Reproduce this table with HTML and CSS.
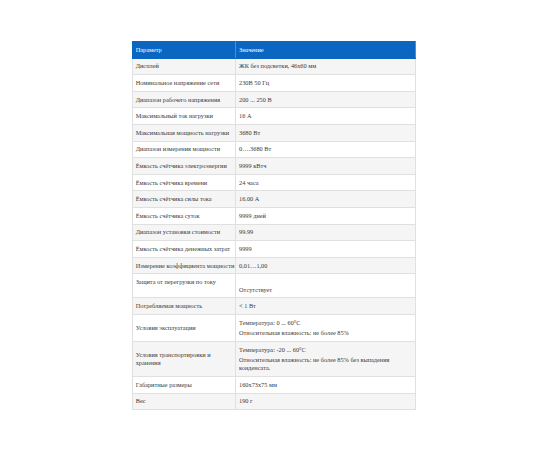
FILE: index.html
```html
<!DOCTYPE html>
<html lang="ru">
<head>
<meta charset="utf-8">
<title>Характеристики</title>
<link rel="stylesheet" href="styles.css">
</head>
<body>
<div class="page">
  <table class="specs">
    <thead>
      <tr><th class="c1">Параметр</th><th class="c2">Значение</th></tr>
    </thead>
    <tbody>
      <tr><td>Дисплей</td><td>ЖК без подсветки, 46x60 мм</td></tr>
      <tr><td>Номинальное напряжение сети</td><td>230В 50 Гц</td></tr>
      <tr><td>Диапазон рабочего напряжения</td><td>200 ... 250 В</td></tr>
      <tr><td>Максимальный ток нагрузки</td><td>16 А</td></tr>
      <tr><td>Максимальная мощность нагрузки</td><td>3680 Вт</td></tr>
      <tr><td>Диапазон измерения мощности</td><td>0….3680 Вт</td></tr>
      <tr><td>Ёмкость счётчика электроэнергии</td><td>9999 кВтч</td></tr>
      <tr><td>Ёмкость счётчика времени</td><td>24 часа</td></tr>
      <tr><td>Ёмкость счётчика силы тока</td><td>16.00 А</td></tr>
      <tr><td>Ёмкость счётчика суток</td><td>9999 дней</td></tr>
      <tr><td>Диапазон установки стоимости</td><td>99.99</td></tr>
      <tr><td>Ёмкость счётчика денежных затрат</td><td>9999</td></tr>
      <tr><td class="nowrap">Измерение коэффициента мощности</td><td>0,01…1,00</td></tr>
      <tr class="protect"><td class="top">Защита от перегрузки по току</td><td class="low">Отсутствует</td></tr>
      <tr><td>Потребляемая мощность</td><td>&lt; 1 Вт</td></tr>
      <tr><td>Условия эксплуатации</td><td><p class="para">Температура: 0 ... 60°C</p><p class="para">Относительная влажность: не более 85%</p></td></tr>
      <tr><td>Условия транспортировки и хранения</td><td><p class="para">Температура: -20 ... 60°C</p><p class="para">Относительная влажность: не более 85% без выпадения конденсата.</p></td></tr>
      <tr><td>Габаритные размеры</td><td>160x73x75 мм</td></tr>
      <tr><td>Вес</td><td>190 г</td></tr>
    </tbody>
  </table>
</div>
</body>
</html>
```
FILE: styles.css
```css
html, body {
  margin: 0;
  padding: 0;
  background: #ffffff;
}
.page {
  padding: 41px 0 0 132px;
}
.specs {
  border-collapse: collapse;
  width: 284px;
  table-layout: fixed;
  font-family: "Liberation Serif", "Times New Roman", serif;
  font-size: 6.3px;
  line-height: 8px;
  color: #3a3a3a;
}
.specs th {
  background: #0b66c2;
  color: #ffffff;
  font-weight: normal;
  text-align: left;
  padding: 3.8px 2.7px;
  border: 1px solid #0b66c2;
  border-right-color: #4a8fd4;
}
.specs th.c1 { width: 97px; }
.specs td {
  padding: 3.8px 2.7px;
  border: 1px solid #e0e0e0;
  vertical-align: middle;
}
.specs tbody tr:nth-child(odd) td {
  background: #f5f5f5;
}
.specs tbody tr:nth-child(even) td {
  background: #ffffff;
}
.specs td.nowrap { white-space: nowrap; }
.specs td.top { vertical-align: top; }
.specs td.low { vertical-align: bottom; padding-top: 11.2px; }
.para {
  margin: 0 0 2.5px 0;
}
.para:last-child {
  margin-bottom: 0;
}
```
